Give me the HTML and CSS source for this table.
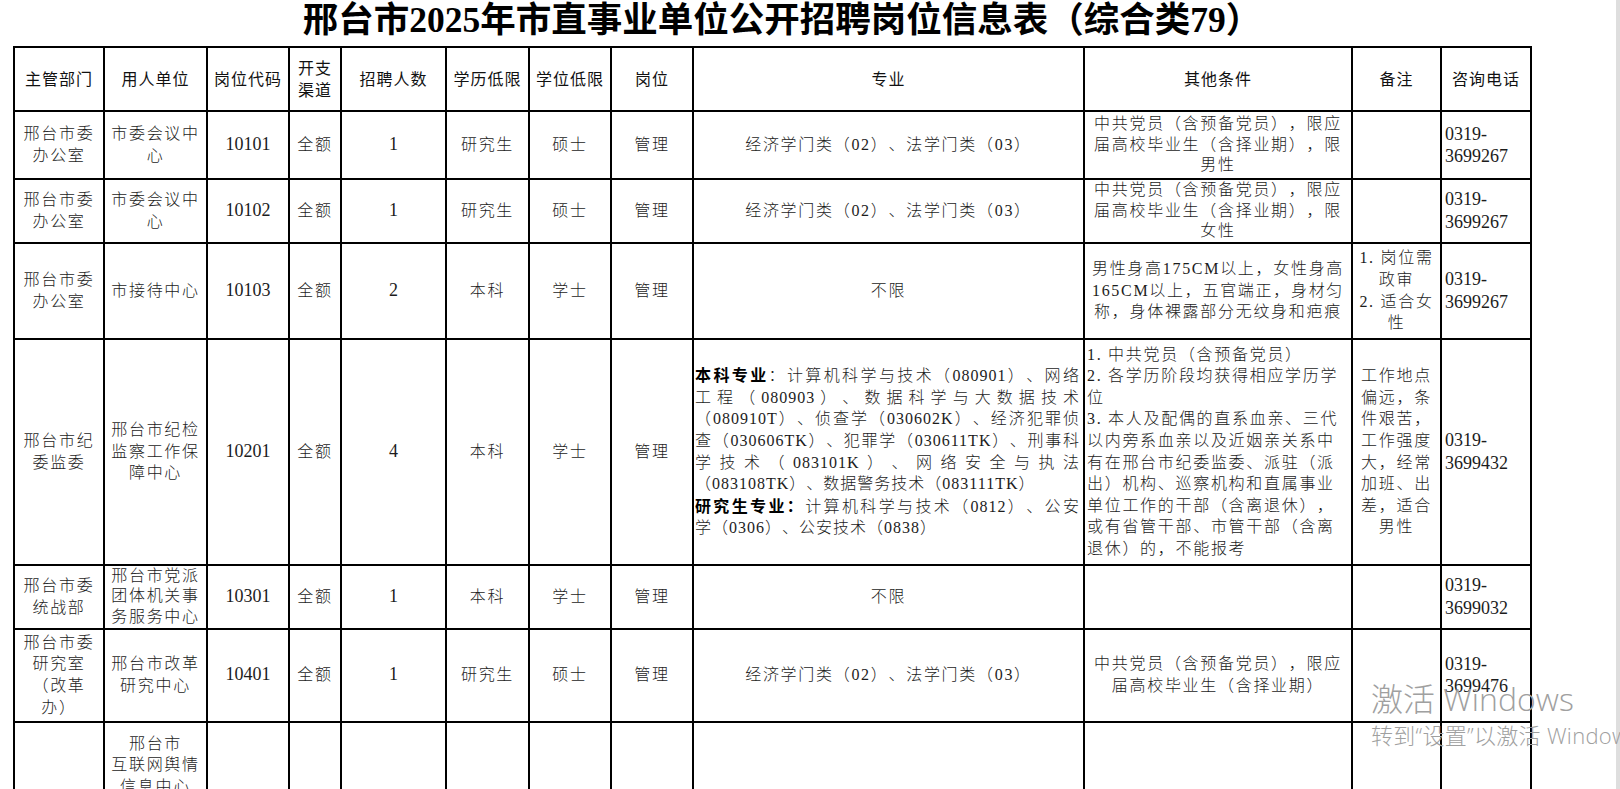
FILE: index.html
```html
<!DOCTYPE html>
<html lang="zh-CN">
<head>
<meta charset="utf-8">
<title>邢台市2025年市直事业单位公开招聘岗位信息表（综合类79）</title>
<link rel="stylesheet" href="styles.css">
</head>
<body>
<div class="screen">
  <div class="page">
    <h1 class="title">邢台市2025年市直事业单位公开招聘岗位信息表（综合类79）</h1>
    <table class="jobs">
      <colgroup>
        <col class="w1"><col class="w2"><col class="w3"><col class="w4"><col class="w5"><col class="w6">
        <col class="w7"><col class="w8"><col class="w9"><col class="w10"><col class="w11"><col class="w12">
      </colgroup>
      <thead>
        <tr class="r0">
          <th>主管部门</th><th>用人单位</th><th>岗位代码</th><th class="narrow">开支<br>渠道</th><th>招聘人数</th><th>学历低限</th>
          <th>学位低限</th><th>岗位</th><th>专业</th><th>其他条件</th><th>备注</th><th>咨询电话</th>
        </tr>
      </thead>
      <tbody>
        <tr class="r1">
          <td>邢台市委<br>办公室</td><td>市委会议中<br>心</td><td class="num">10101</td><td>全额</td><td class="num">1</td><td>研究生</td>
          <td>硕士</td><td>管理</td><td>经济学门类（02）、法学门类（03）</td>
          <td class="tight">中共党员（含预备党员），限应<br>届高校毕业生（含择业期），限<br>男性</td><td></td><td class="tel">0319-<br>3699267</td>
        </tr>
        <tr class="r2">
          <td>邢台市委<br>办公室</td><td>市委会议中<br>心</td><td class="num">10102</td><td>全额</td><td class="num">1</td><td>研究生</td>
          <td>硕士</td><td>管理</td><td>经济学门类（02）、法学门类（03）</td>
          <td class="tight">中共党员（含预备党员），限应<br>届高校毕业生（含择业期），限<br>女性</td><td></td><td class="tel">0319-<br>3699267</td>
        </tr>
        <tr class="r3">
          <td>邢台市委<br>办公室</td><td>市接待中心</td><td class="num">10103</td><td>全额</td><td class="num">2</td><td>本科</td>
          <td>学士</td><td>管理</td><td>不限</td>
          <td>男性身高175CM以上，女性身高<br>165CM以上，五官端正，身材匀<br>称，身体裸露部分无纹身和疤痕</td>
          <td>1. 岗位需<br>政审<br>2. 适合女<br>性</td><td class="tel">0319-<br>3699267</td>
        </tr>
        <tr class="r4">
          <td>邢台市纪<br>委监委</td><td>邢台市纪检<br>监察工作保<br>障中心</td><td class="num">10201</td><td>全额</td><td class="num">4</td><td>本科</td>
          <td>学士</td><td>管理</td>
          <td class="major">
            <div class="jl"><b>本科专业</b>：计算机科学与技术（080901）、网络</div>
            <div class="jl">工程（080903）、数据科学与大数据技术</div>
            <div class="jl">（080910T）、侦查学（030602K）、经济犯罪侦</div>
            <div class="jl">查（030606TK）、犯罪学（030611TK）、刑事科</div>
            <div class="jl">学技术（083101K）、网络安全与执法</div>
            <div class="ll">（083108TK）、数据警务技术（083111TK）</div>
            <div class="jl"><b>研究生专业：</b>计算机科学与技术（0812）、公安</div>
            <div class="ll">学（0306）、公安技术（0838）</div>
          </td>
          <td class="cond">1. 中共党员（含预备党员）<br>2. 各学历阶段均获得相应学历学<br>位<br>3. 本人及配偶的直系血亲、三代<br>以内旁系血亲以及近姻亲关系中<br>有在邢台市纪委监委、派驻（派<br>出）机构、巡察机构和直属事业<br>单位工作的干部（含离退休），<br>或有省管干部、市管干部（含离<br>退休）的，不能报考</td>
          <td>工作地点<br>偏远，条<br>件艰苦，<br>工作强度<br>大，经常<br>加班、出<br>差，适合<br>男性</td><td class="tel">0319-<br>3699432</td>
        </tr>
        <tr class="r5">
          <td>邢台市委<br>统战部</td><td class="tight">邢台市党派<br>团体机关事<br>务服务中心</td><td class="num">10301</td><td>全额</td><td class="num">1</td><td>本科</td>
          <td>学士</td><td>管理</td><td>不限</td><td></td><td></td><td class="tel">0319-<br>3699032</td>
        </tr>
        <tr class="r6">
          <td>邢台市委<br>研究室<br>（改革<br>办）</td><td>邢台市改革<br>研究中心</td><td class="num">10401</td><td>全额</td><td class="num">1</td><td>研究生</td>
          <td>硕士</td><td>管理</td><td>经济学门类（02）、法学门类（03）</td>
          <td>中共党员（含预备党员），限应<br>届高校毕业生（含择业期）</td><td></td><td class="tel">0319-<br>3699476</td>
        </tr>
        <tr class="r7">
          <td></td><td class="top">邢台市<br>互联网舆情<br>信息中心</td><td></td><td></td><td></td><td></td>
          <td></td><td></td><td></td><td></td><td></td><td></td>
        </tr>
      </tbody>
    </table>
  </div>
  <div class="scrollbar"></div>
</div>
<div class="activate">
  <div class="act1">激活 Windows</div>
  <div class="act2">转到“设置”以激活 Windows。</div>
</div>
</body>
</html>
```
FILE: styles.css
```css
html, body {
  margin: 0;
  padding: 0;
  overflow: hidden;
  background: #ffffff;
}

.screen {
  display: flex;
  width: 1620px;
  height: 789px;
  overflow: hidden;
}

.page {
  flex: 1;
  padding-left: 13px;
  overflow: hidden;
}

.scrollbar {
  width: 4px;
  background: #dedede;
}

.title {
  width: 1510px;
  margin: 0;
  padding-left: 14px;
  height: 40px;
  line-height: 40px;
  text-align: center;
  font-family: "Liberation Serif", "Noto Sans CJK SC", serif;
  font-size: 35.5px;
  font-weight: 700;
  color: #000;
  white-space: nowrap;
}

.jobs {
  margin-top: 6px;
  width: 1519px;
  table-layout: fixed;
  border-collapse: collapse;
  color: #1c1c1c;
  text-spacing-trim: space-all;
}

.w1 { width: 90px; }
.w2 { width: 103px; }
.w3 { width: 82px; }
.w4 { width: 52px; }
.w5 { width: 105px; }
.w6 { width: 83px; }
.w7 { width: 82px; }
.w8 { width: 82px; }
.w9 { width: 391px; }
.w10 { width: 268px; }
.w11 { width: 89px; }
.w12 { width: 90px; }

.jobs th,
.jobs td {
  border: 2px solid #000;
  padding: 0 3px;
  text-align: center;
  vertical-align: middle;
  white-space: nowrap;
  overflow: hidden;
  font-size: 16px;
  line-height: 21.6px;
}

.jobs th {
  font-family: "Noto Sans CJK SC", sans-serif;
  font-weight: 400;
  letter-spacing: 1px;
  color: #111;
}

.jobs td {
  font-family: "Liberation Serif", "Noto Sans CJK SC", serif;
  font-weight: 300;
  letter-spacing: 1.7px;
}

.jobs td.tight {
  line-height: 20.5px;
}

.r0 { height: 64px; }
.r1 { height: 68px; }
.r2 { height: 62px; }
.r3 { height: 96px; }
.r4 { height: 226px; }
.r5 { height: 64px; }
.r6 { height: 93px; }
.r7 { height: 260px; }

.jobs td.num {
  font-size: 18px;
  letter-spacing: 0;
}

.jobs td.tel {
  text-align: left;
  padding-left: 3px;
  font-size: 18px;
  letter-spacing: 0;
  line-height: 22.4px;
}

.jobs td.major {
  text-align: left;
  padding: 0 3px 0 1px;
  letter-spacing: 1px;
}

.jl {
  text-align: justify;
  text-align-last: justify;
}

.ll {
  text-align: left;
}

.major b,
.jl b {
  font-family: "Noto Sans CJK SC", sans-serif;
  font-weight: 700;
  color: #000;
}

.jobs td.cond {
  text-align: left;
  padding-left: 2px;
}

.jobs td.top {
  vertical-align: top;
  padding-top: 10px;
}

.activate {
  position: absolute;
  left: 1371px;
  top: 679px;
  font-family: "Open Sans", "Noto Sans CJK SC", sans-serif;
  font-weight: 300;
  color: #a0a0a0;
  white-space: nowrap;
  pointer-events: none;
}

.act1 {
  font-size: 32px;
  line-height: 40px;
}

.act2 {
  font-size: 22px;
  line-height: 26px;
  margin-top: 3px;
  letter-spacing: 0.3px;
}
```
